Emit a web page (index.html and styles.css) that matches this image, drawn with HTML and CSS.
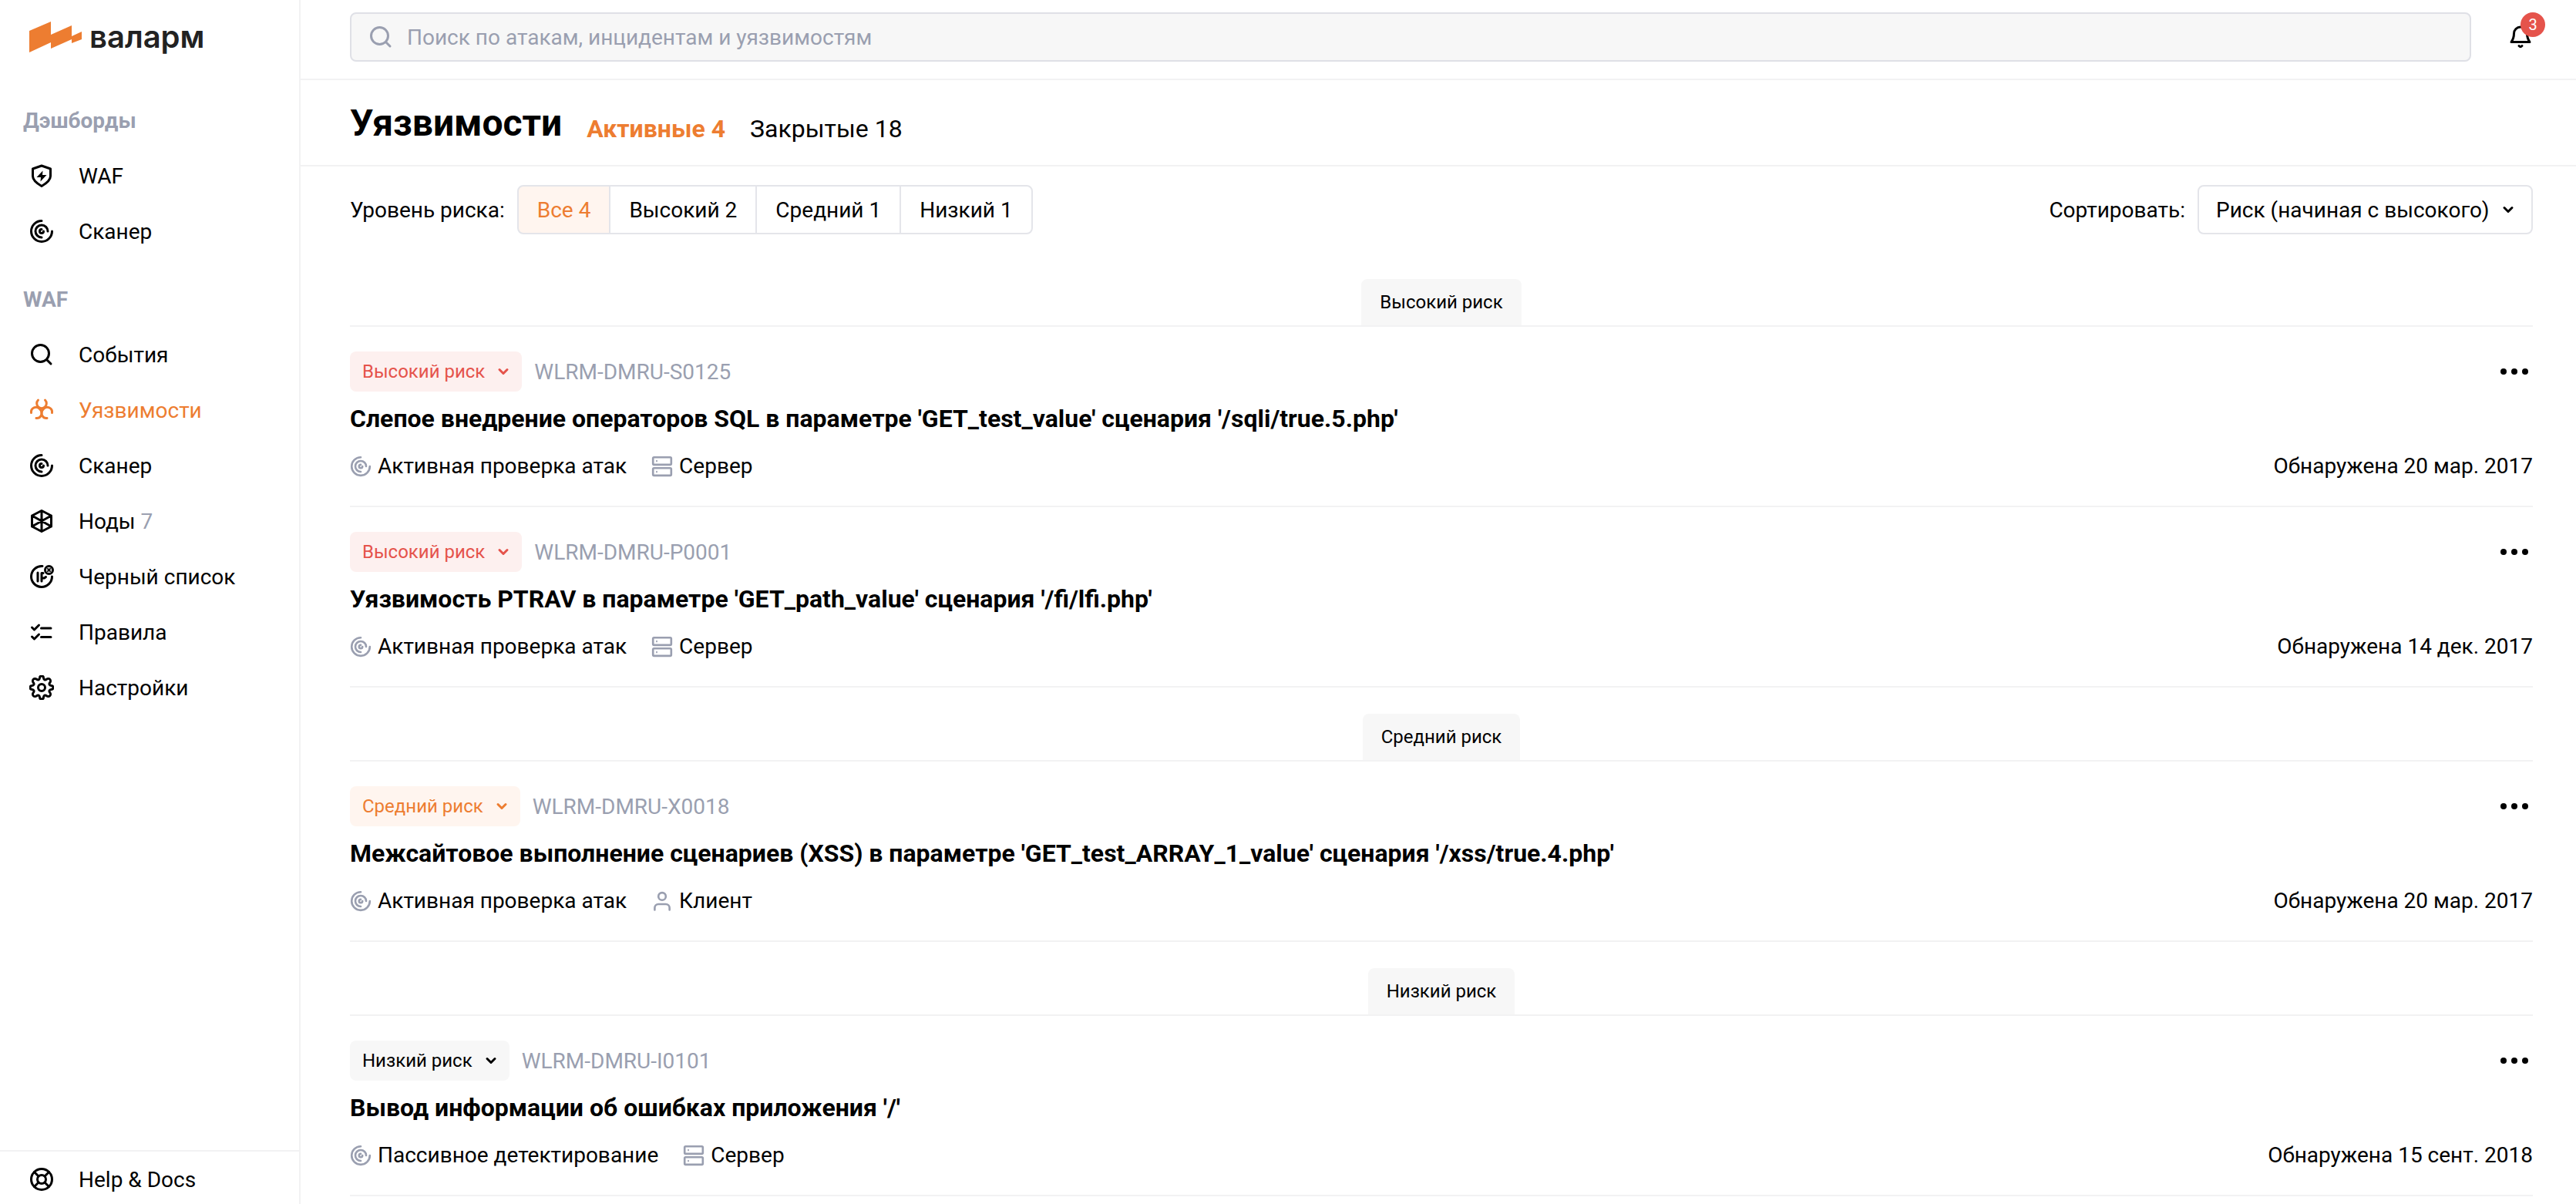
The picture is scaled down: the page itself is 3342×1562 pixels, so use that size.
FILE: index.html
```html
<!DOCTYPE html>
<html lang="ru">
<head>
<meta charset="utf-8">
<meta name="viewport" content="width=device-width, initial-scale=1">
<title>Валарм — Уязвимости</title>
<link rel="stylesheet" href="styles.css">
</head>
<body>
<svg class="sprite" aria-hidden="true">
  <symbol id="i-shield" viewBox="0 0 32 32"><path d="M16 3 27.500 7v9.500c0 5.500-5.500 9.500-11.500 13-6-3.500-11.500-7.500-11.500-13V7Z"/><path class="fill" d="M17.500 9.500 9.500 18H15L14.500 23.500 22.500 15H17Z"/></symbol>
  <symbol id="i-scan" viewBox="0 0 32 32"><path d="M16 2.500A13.500 13.500 0 1 0 29.500 16"/><path d="M16 24A8 8 0 1 1 24 16"/><path d="M16 13.500A2.500 2.500 0 1 0 18.500 16"/></symbol>
  <symbol id="i-search" viewBox="0 0 32 32"><circle cx="14.500" cy="14.500" r="11"/><path d="m23 23 5 5"/></symbol>
  <symbol id="i-bio" viewBox="0 0 32 32"><path d="M11.500 3a6.300 6.300 0 1 0 9 0"/><path d="M2.500 19.500a6.300 6.300 0 0 1 11-5c3 3 3.500 7 1.500 9a6 6 0 0 1-6 3"/><path d="M29.500 19.500a6.300 6.300 0 0 0-11-5c-3 3-3.500 7-1.500 9a6 6 0 0 0 6 3"/></symbol>
  <symbol id="i-node" viewBox="0 0 32 32"><path d="M16 2.500 28.500 9v14L16 29.500 3.500 23V9ZM16 2.500v27M3.500 9l25 14M28.500 9l-25 14"/></symbol>
  <symbol id="i-ip" viewBox="0 0 32 32"><path d="M17 2.500A13.500 13.500 0 1 0 29.500 16"/><path d="M11 11v11M16 22V11.500h2M16 18h3.500l2-1.500"/><circle cx="25.500" cy="7.500" r="5"/><path class="thin" d="m24 6 3 3m0-3-3 3"/></symbol>
  <symbol id="i-rules" viewBox="0 0 32 32"><path d="m3.500 10 3 3 6-6M3.500 22l3 3 6-6M15.500 11H28M15.500 22.500H28"/></symbol>
  <symbol id="i-gear" viewBox="0 0 32 32"><circle cx="16" cy="16" r="4.500"/><path d="M13.500 3.500a2.500 2.500 0 0 1 5 0c.3 2.500 2 3.300 4 1.800a2.600 2.600 0 0 1 4.200 4.200c-1.500 2-.7 3.700 1.800 4a2.500 2.500 0 0 1 0 5c-2.500.3-3.300 2-1.800 4a2.600 2.600 0 0 1-4.200 4.200c-2-1.500-3.700-.7-4 1.800a2.500 2.500 0 0 1-5 0c-.3-2.500-2-3.300-4-1.800a2.600 2.600 0 0 1-4.200-4.200c1.500-2 .7-3.700-1.800-4a2.500 2.500 0 0 1 0-5c2.500-.3 3.300-2 1.800-4a2.600 2.600 0 0 1 4.200-4.200c2 1.500 3.700.7 4-1.800Z"/></symbol>
  <symbol id="i-help" viewBox="0 0 32 32"><circle cx="16" cy="16" r="13.500"/><circle cx="16" cy="16" r="5.500"/><path d="m6.500 6.500 5.500 5.500m8 8 5.500 5.500m0-19L20 12m-8 8-5.500 5.500"/></symbol>
  <symbol id="i-bell" viewBox="0 0 32 32"><path d="M4 22.500C6.500 19 7.500 17 7.500 11.500a8.500 8.500 0 0 1 17 0c0 5.500 1 7.500 3.500 11Z"/><path d="M14 27.500c1 1.500 3 1.500 4 0"/></symbol>
  <symbol id="i-server" viewBox="0 0 32 32"><rect x="2.500" y="2.500" width="27" height="11" rx="1.500"/><rect x="2.500" y="18.500" width="27" height="11" rx="1.500"/><path class="thin" d="M8 7.500v1M8 23.500v1"/></symbol>
  <symbol id="i-user" viewBox="0 0 32 32"><circle cx="16" cy="9" r="5.500"/><path d="M5 29v-3a5.500 5.500 0 0 1 5.500-5.500h11A5.500 5.500 0 0 1 27 26v3"/></symbol>
  <symbol id="i-down" viewBox="0 0 16 16"><path d="m3 5.500 5 5 5-5"/></symbol>
  <symbol id="i-more" viewBox="0 0 48 8"><circle class="fill" cx="10" cy="4" r="4"/><circle class="fill" cx="24" cy="4" r="4"/><circle class="fill" cx="38" cy="4" r="4"/></symbol>
</svg>

<div class="app">
  <aside class="sidebar">
    <a class="logo" href="#">
      <svg class="logo-mark" viewBox="0 0 68 40" aria-hidden="true"><path d="M0 12 28 0v17L55 5v14l13-6v10L55 28v-5L28 35v-8L0 40Z"/></svg>
      <span>валарм</span>
    </a>
    <nav class="nav">
      <h2>Дэшборды</h2>
      <a href="#"><svg class="icon"><use href="#i-shield"/></svg>WAF</a>
      <a href="#"><svg class="icon"><use href="#i-scan"/></svg>Сканер</a>
    </nav>
    <nav class="nav">
      <h2>WAF</h2>
      <a href="#"><svg class="icon"><use href="#i-search"/></svg>События</a>
      <a class="current" href="#"><svg class="icon"><use href="#i-bio"/></svg>Уязвимости</a>
      <a href="#"><svg class="icon"><use href="#i-scan"/></svg>Сканер</a>
      <a href="#"><svg class="icon"><use href="#i-node"/></svg><span>Ноды <span class="muted">7</span></span></a>
      <a href="#"><svg class="icon"><use href="#i-ip"/></svg>Черный список</a>
      <a href="#"><svg class="icon"><use href="#i-rules"/></svg>Правила</a>
      <a href="#"><svg class="icon"><use href="#i-gear"/></svg>Настройки</a>
    </nav>
    <div class="sidebar-foot"><a href="#"><svg class="icon"><use href="#i-help"/></svg>Help &amp; Docs</a></div>
  </aside>

  <div class="page">
    <header class="topbar">
      <label class="search">
        <svg class="icon"><use href="#i-search"/></svg>
        <input type="search" aria-label="Поиск" placeholder="Поиск по атакам, инцидентам и уязвимостям">
      </label>
      <button class="bell" type="button" aria-label="Уведомления">
        <svg class="icon"><use href="#i-bell"/></svg>
        <span class="count">3</span>
      </button>
    </header>

    <div class="heading">
      <h1>Уязвимости</h1>
      <a class="current" href="#">Активные 4</a>
      <a href="#">Закрытые 18</a>
    </div>

    <main class="content">
      <div class="filters">
        <span id="risk-label">Уровень риска:</span>
        <div class="segments" role="group" aria-labelledby="risk-label">
          <button class="active" type="button">Все 4</button>
          <button type="button">Высокий 2</button>
          <button type="button">Средний 1</button>
          <button type="button">Низкий 1</button>
        </div>
        <label class="sort-label" for="sort">Сортировать:</label>
        <div class="select">
          <select id="sort"><option>Риск (начиная с высокого)</option></select>
          <svg class="chevron"><use href="#i-down"/></svg>
        </div>
      </div>

      <section class="group">
        <h2><span>Высокий риск</span></h2>
        <article class="vuln">
          <div class="row">
            <button class="risk high" type="button">Высокий риск<svg class="chevron"><use href="#i-down"/></svg></button>
            <span class="muted">WLRM-DMRU-S0125</span>
            <button class="more" type="button" aria-label="Действия"><svg><use href="#i-more"/></svg></button>
          </div>
          <h3>Слепое внедрение операторов SQL в параметре 'GET_test_value' сценария '/sqli/true.5.php'</h3>
          <div class="meta">
            <span><svg class="icon"><use href="#i-scan"/></svg>Активная проверка атак</span>
            <span><svg class="icon"><use href="#i-server"/></svg>Сервер</span>
            <time>Обнаружена 20 мар. 2017</time>
          </div>
        </article>
        <article class="vuln">
          <div class="row">
            <button class="risk high" type="button">Высокий риск<svg class="chevron"><use href="#i-down"/></svg></button>
            <span class="muted">WLRM-DMRU-P0001</span>
            <button class="more" type="button" aria-label="Действия"><svg><use href="#i-more"/></svg></button>
          </div>
          <h3>Уязвимость PTRAV в параметре 'GET_path_value' сценария '/fi/lfi.php'</h3>
          <div class="meta">
            <span><svg class="icon"><use href="#i-scan"/></svg>Активная проверка атак</span>
            <span><svg class="icon"><use href="#i-server"/></svg>Сервер</span>
            <time>Обнаружена 14 дек. 2017</time>
          </div>
        </article>
      </section>

      <section class="group">
        <h2><span>Средний риск</span></h2>
        <article class="vuln">
          <div class="row">
            <button class="risk medium" type="button">Средний риск<svg class="chevron"><use href="#i-down"/></svg></button>
            <span class="muted">WLRM-DMRU-X0018</span>
            <button class="more" type="button" aria-label="Действия"><svg><use href="#i-more"/></svg></button>
          </div>
          <h3>Межсайтовое выполнение сценариев (XSS) в параметре 'GET_test_ARRAY_1_value' сценария '/xss/true.4.php'</h3>
          <div class="meta">
            <span><svg class="icon"><use href="#i-scan"/></svg>Активная проверка атак</span>
            <span><svg class="icon"><use href="#i-user"/></svg>Клиент</span>
            <time>Обнаружена 20 мар. 2017</time>
          </div>
        </article>
      </section>

      <section class="group">
        <h2><span>Низкий риск</span></h2>
        <article class="vuln">
          <div class="row">
            <button class="risk low" type="button">Низкий риск<svg class="chevron"><use href="#i-down"/></svg></button>
            <span class="muted">WLRM-DMRU-I0101</span>
            <button class="more" type="button" aria-label="Действия"><svg><use href="#i-more"/></svg></button>
          </div>
          <h3>Вывод информации об ошибках приложения '/'</h3>
          <div class="meta">
            <span><svg class="icon"><use href="#i-scan"/></svg>Пассивное детектирование</span>
            <span><svg class="icon"><use href="#i-server"/></svg>Сервер</span>
            <time>Обнаружена 15 сент. 2018</time>
          </div>
        </article>
      </section>
    </main>
  </div>
</div>
</body>
</html>
```
FILE: styles.css
```css
:root {
  --line: #f2f2f3;
  --control: #e4e5ea;
  --muted: #9a9fb0;
  --accent: #ed7d31;
  --danger: #e5534b;
  --surface: #f7f7f7;
}

* { box-sizing: border-box; }

body {
  margin: 0;
  background: #fff;
  color: #000;
  font: 28px/41px Roboto, "Noto Sans", sans-serif;
}

h1, h2, h3 { margin: 0; }
a { color: inherit; text-decoration: none; }
button, input, select { font: inherit; color: inherit; }
button { cursor: pointer; }

.sprite { display: none; }

.icon, .chevron {
  flex: none;
  width: 32px;
  height: 32px;
  fill: none;
  stroke: currentColor;
  stroke-width: 3;
  stroke-linecap: round;
  stroke-linejoin: round;
}
.chevron { width: 16px; height: 16px; }
.fill { fill: currentColor; stroke: none; }
.thin { stroke-width: 2; }
.muted { color: var(--muted); }

.app { display: flex; min-height: 100vh; }

/* Sidebar */
.sidebar {
  display: flex;
  flex: none;
  flex-direction: column;
  width: 390px;
  border-right: 2px solid var(--line);
}
.logo {
  display: flex;
  align-items: center;
  gap: 10px;
  height: 96px;
  margin-bottom: 24px;
  padding-left: 38px;
  color: #222;
  font: 600 40px/48px Inter, sans-serif;
}
.logo-mark { width: 68px; height: 40px; fill: var(--accent); }
.nav { margin-bottom: 16px; }
.nav h2 {
  padding-left: 30px;
  color: var(--muted);
  font-size: 28px;
  line-height: 73px;
  height: 72px;
}
.sidebar a { color: inherit; }
.sidebar .logo { color: #222; }
.nav a, .sidebar-foot a {
  display: flex;
  align-items: center;
  gap: 32px;
  height: 72px;
  padding-left: 38px;
}
.nav a.current { color: var(--accent); }
.sidebar-foot {
  margin-top: auto;
  padding-top: 4px;
  border-top: 2px solid var(--line);
}
.sidebar-foot a { height: 64px; }

/* Page header */
.page { flex: 1; min-width: 0; }
.topbar {
  display: flex;
  align-items: flex-start;
  gap: 48px;
  height: 104px;
  padding: 16px 56px 0 64px;
  border-bottom: 2px solid var(--line);
}
.search {
  display: flex;
  flex: 1;
  align-items: center;
  gap: 18px;
  height: 64px;
  padding: 0 22px;
  border: 2px solid #dfe0e6;
  border-radius: 8px;
  background: var(--surface);
  color: var(--muted);
}
.search input {
  flex: 1;
  height: 41px;
  padding: 0;
  border: 0;
  outline: 0;
  background: none;
}
.search input::placeholder { color: var(--muted); opacity: 1; }
.bell {
  position: relative;
  display: flex;
  align-items: center;
  height: 64px;
  padding: 0;
  border: 0;
  background: none;
}
.count {
  position: absolute;
  top: 0;
  right: -16px;
  width: 32px;
  height: 32px;
  border-radius: 50%;
  background: var(--danger);
  color: #fff;
  font-size: 20px;
  line-height: 32px;
}
.heading {
  display: flex;
  align-items: center;
  gap: 32px;
  height: 112px;
  padding: 2px 56px 0 64px;
  border-bottom: 2px solid var(--line);
  font-size: 32px;
}
.heading h1 { font-size: 48px; line-height: 56px; }
.heading a { padding-top: 14px; }
.heading a.current { color: var(--accent); font-weight: 700; }

/* Filters */
.content { padding: 24px 56px 0 64px; }
.filters {
  display: flex;
  align-items: center;
  gap: 16px;
  margin-bottom: 58px;
}
.segments { display: flex; }
.segments button {
  height: 64px;
  margin-left: -2px;
  padding: 0 24px;
  border: 2px solid var(--control);
  background: #fff;
}
.segments button:first-child { margin-left: 0; border-radius: 8px 0 0 8px; }
.segments button:last-child { border-radius: 0 8px 8px 0; }
.segments .active { background: #fff5ef; color: var(--accent); }
.sort-label { margin-left: auto; }
.select { position: relative; }
.select select {
  display: block;
  height: 64px;
  padding: 0 54px 0 22px;
  border: 2px solid var(--control);
  border-radius: 8px;
  background: #fff;
  appearance: none;
}
.select .chevron {
  position: absolute;
  top: 24px;
  right: 24px;
  pointer-events: none;
}

/* Vulnerability list */
.group { margin-bottom: 34px; }
.group:last-child { margin-bottom: 0; }
.group h2 {
  display: flex;
  justify-content: center;
  border-bottom: 2px solid var(--line);
  font-size: 24px;
  font-weight: 400;
  line-height: 60px;
}
.group h2 span {
  padding: 0 24px;
  border-radius: 8px 8px 0 0;
  background: var(--surface);
}
.vuln { padding: 32px 0 30px; border-bottom: 2px solid var(--line); }
.row { display: flex; align-items: center; gap: 16px; }
.risk {
  display: flex;
  align-items: center;
  gap: 16px;
  height: 52px;
  padding: 0 16px;
  border: 0;
  border-radius: 8px;
  font-size: 24px;
}
.risk.high { background: #fdf0ef; color: var(--danger); }
.risk.medium { background: #fff5ef; color: var(--accent); }
.risk.low { background: var(--surface); }
.more {
  display: flex;
  margin-left: auto;
  padding: 16px 0;
  border: 0;
  background: none;
}
.more svg { width: 48px; height: 8px; }
.vuln h3 { margin: 10px 0 16px; font-size: 32px; line-height: 50px; }
.meta { display: flex; gap: 32px; line-height: 42px; }
.meta span { display: flex; align-items: center; gap: 8px; }
.meta .icon { width: 28px; height: 28px; color: var(--muted); }
.meta time { margin-left: auto; }
```
